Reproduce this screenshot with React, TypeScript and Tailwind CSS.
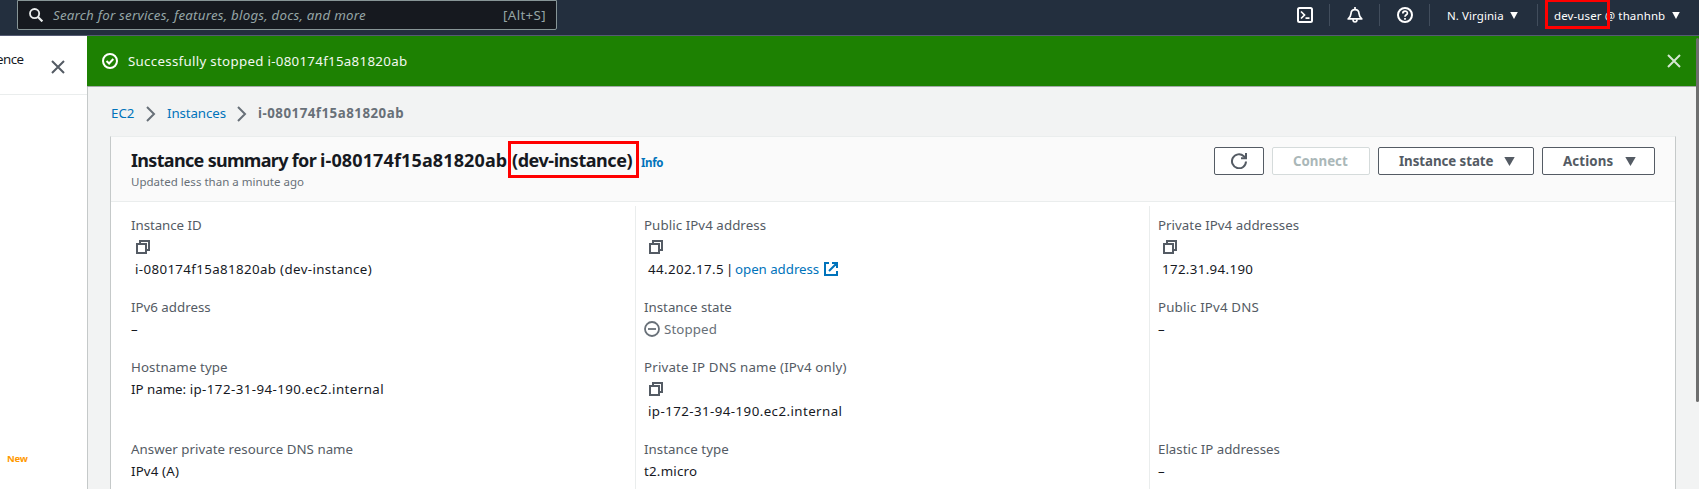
import type { ReactNode } from "react";

function Caret({ className }: { className: string }) {
  return (
    <svg viewBox="0 0 11 9" className={className} fill="currentColor" preserveAspectRatio="none">
      <path d="M0.3 0h10.4L5.5 9z" />
    </svg>
  );
}

function Close({ className }: { className: string }) {
  return (
    <svg viewBox="0 0 14 14" className={className} fill="none" stroke="currentColor" strokeWidth="2">
      <path d="M1 1l12 12M13 1L1 13" />
    </svg>
  );
}

function Chevron() {
  return (
    <svg viewBox="0 0 10 16" className="h-4 w-2.5 shrink-0 text-[#687078]" fill="none" stroke="currentColor" strokeWidth="2">
      <path d="M1 1l7 7-7 7" />
    </svg>
  );
}

function CopyIcon() {
  return (
    <div className="flex h-[22px] items-center pl-1">
      <svg viewBox="0 0 16 16" className="size-4 text-[#545b64]" fill="none" stroke="currentColor" strokeWidth="2">
        <path d="M2 5h9v9H2z" />
        <path d="M5 5V2h9v9h-3" />
      </svg>
    </div>
  );
}

function Field({ label, tracking = "tracking-normal", height, children }: { label: string; tracking?: string; height: string; children: ReactNode }) {
  return (
    <div className={height}>
      <div className={`text-[#545b64] ${tracking}`}>{label}</div>
      {children}
    </div>
  );
}

function Divider() {
  return <div className="h-[22px] w-px bg-[#414d5c]" />;
}

function Header() {
  return (
    <header className="flex h-9 shrink-0 border-b border-[#545b73] bg-[#232f3e] pl-[17px] text-white">
      <div className="flex h-[30px] w-[540px] items-center rounded-b-[2px] border border-[#879596] bg-[#16191f] pr-[10px] pl-[11px] text-[13.3px] text-[#95a5a6]">
        <svg viewBox="0 0 14 14" className="size-[14px] text-[#eaeded]" fill="none" stroke="currentColor" strokeWidth="1.8">
          <circle cx="5.6" cy="5.6" r="4.6" />
          <path d="M9 9l4.4 4.4" strokeWidth="2.2" />
        </svg>
        <span className="ml-[10px] pt-px tracking-[0.23px] italic">Search for services, features, blogs, docs, and more</span>
        <span className="ml-auto pt-px tracking-[0.37px]">[Alt+S]</span>
      </div>
      <div className="ml-auto flex h-[30px] items-center text-[11.5px]">
        <svg viewBox="0 0 16 16" className="mr-4 size-4" fill="none" stroke="currentColor" strokeWidth="2">
          <rect x="1" y="1" width="14" height="14" rx="1.5" />
          <path d="M4 4.5L7.5 8 4 11.5M8.5 11.2h4" strokeWidth="1.7" />
        </svg>
        <Divider />
        <svg viewBox="0 0 16 16" className="mr-4 ml-[17px] size-4" fill="none" stroke="currentColor" strokeWidth="1.7" strokeLinejoin="round">
          <path d="M1.2 11.9C3.2 10.4 3.8 9 4 6.6 4.1 4.1 5.6 2.6 8 2.6s3.9 1.5 4 4c.2 2.4.8 3.8 2.8 5.3z" />
          <path d="M8 0v2.4M6 12.3c0 3.6 4 3.6 4 0" />
        </svg>
        <Divider />
        <svg viewBox="0 0 16 16" className="mr-4 ml-[17px] size-4" fill="none" stroke="currentColor" strokeWidth="2">
          <circle cx="8" cy="8" r="7" />
          <path d="M5.8 6.6C5.8 3.4 10.4 3.5 10.4 6.2 10.4 7.8 8 7.8 8 9.8M8 10.9v1.8" strokeWidth="1.7" />
        </svg>
        <Divider />
        <span className="ml-[17px] w-[58px] pt-px tracking-[0.07px] whitespace-nowrap">N. Virginia</span>
        <Caret className="ml-[5px] h-[7px] w-2" />
        <div className="ml-[19px]">
          <Divider />
        </div>
        <span className="relative ml-4 w-[113px] pt-px tracking-[0.12px] whitespace-nowrap">
          dev-user @ thanhnb
          <span className="absolute -top-[7px] -left-[9px] h-[30px] w-[65px] border-[3px] border-[#f00]" />
        </span>
        <Caret className="mr-[19px] ml-[5px] h-[7px] w-2" />
      </div>
    </header>
  );
}

function Sidebar() {
  return (
    <aside className="flex w-[87px] shrink-0 flex-col bg-white">
      <div className="flex h-[59px] justify-between border-b border-[#eaeded] pr-[22px]">
        <span className="-ml-[4px] pt-[12px] text-[13.3px] leading-[22px] tracking-[-0.5px] text-[#16191f]">ence</span>
        <Close className="mt-6 size-[14px] text-[#545b64]" />
      </div>
      <span className="mt-[358px] ml-[7px] text-[9.5px] leading-3 font-bold tracking-[-0.2px] text-[#ff9900]">New</span>
    </aside>
  );
}

const button = "flex h-7 items-center rounded-[2px] border bg-white text-left whitespace-nowrap";

function CardHeader() {
  return (
    <div className="flex h-[65px] shrink-0 justify-between border-b border-[#eaeded] bg-[#fafafa] pr-5 pl-5">
      <div>
        <h2 className="flex h-[44px] items-baseline pt-[12px] text-[18px] leading-[22px] font-bold whitespace-nowrap text-[#16191f]">
          <span className="w-[189px] tracking-[-0.68px]">Instance summary for</span>
          <span className="w-[192px] tracking-[0.13px]">i-080174f15a81820ab</span>
          <span className="relative w-[129px] tracking-[-0.45px]">
            (dev-instance)
            <span className="absolute -top-[8px] -left-[4px] h-[37px] w-[131px] border-[3px] border-[#f00]" />
          </span>
          <span className="text-[11.5px] tracking-[-0.35px] text-[#0073bb]">Info</span>
        </h2>
        <p className="-mt-[7px] text-[11.5px] leading-4 tracking-[0.02px] text-[#687078]">Updated less than a minute ago</p>
      </div>
      <div className="flex gap-2 pt-[10px] text-[13.3px] font-bold text-[#545b64]">
        <button className={`${button} w-[50px] justify-center border-[#545b64]`}>
          <svg viewBox="0 0 16 16" className="size-4" fill="none" stroke="currentColor" strokeWidth="2">
            <path d="M15 8.5A7 7 0 1 1 12.8 3.2L15 5.2" />
            <path d="M15 0v5.2h-5" />
          </svg>
        </button>
        <button className={`${button} w-[98px] border-[#d5dbdb] pt-px pl-5 text-[#aab7b8]`}>Connect</button>
        <button className={`${button} w-[156px] border-[#545b64] pl-5 tracking-[-0.06px]`}>
          <span className="w-[105px] pt-px">Instance state</span>
          <Caret className="h-[9px] w-[11px]" />
        </button>
        <button className={`${button} w-[113px] border-[#545b64] pl-5 tracking-[0.13px]`}>
          <span className="w-[62px] pt-px">Actions</span>
          <Caret className="h-[9px] w-[11px]" />
        </button>
      </div>
    </div>
  );
}

function Summary() {
  return (
    <div className="flex min-h-0 flex-1 pt-1 text-[13.3px] leading-[22px] whitespace-nowrap text-[#16191f]">
      <div className="w-[524px] pt-2 pl-5">
        <Field label="Instance ID" tracking="tracking-[-0.05px]" height="h-[82px]">
          <CopyIcon />
          <div className="pl-1 tracking-[0.37px]">i-080174f15a81820ab (dev-instance)</div>
        </Field>
        <Field label="IPv6 address" height="h-[60px]">–</Field>
        <Field label="Hostname type" tracking="tracking-[0.1px]" height="h-[82px]">
          <span>IP name: </span>
          <span className="tracking-[0.43px]">ip-172-31-94-190.ec2.internal</span>
        </Field>
        <Field label="Answer private resource DNS name" tracking="tracking-[0.03px]" height="h-[44px]">
          <span className="tracking-[0.15px]">IPv4 (A)</span>
        </Field>
      </div>
      <div className="w-[514px] border-l border-[#eaeded] pt-2 pl-2">
        <Field label="Public IPv4 address" tracking="tracking-[0.07px]" height="h-[82px]">
          <CopyIcon />
          <div className="flex items-center pl-1">
            <span className="w-[78px] tracking-[0.4px]">44.202.17.5</span>
            <span className="w-[9px]">|</span>
            <a className="w-[89px] tracking-[-0.04px] text-[#0073bb]">open address</a>
            <svg viewBox="0 0 14 14" className="size-[14px] text-[#0073bb]" fill="none" stroke="currentColor" strokeWidth="2">
              <path d="M5 1H1v12h12V9M8 1h5v5M13 1L5 9" />
            </svg>
          </div>
        </Field>
        <Field label="Instance state" height="h-[60px]">
          <div className="flex items-center gap-1 text-[#687078]">
            <svg viewBox="0 0 16 16" className="size-4" fill="none" stroke="currentColor" strokeWidth="1.8">
              <circle cx="8" cy="8" r="7" />
              <path d="M4 8h8" />
            </svg>
            <span className="tracking-[0.12px]">Stopped</span>
          </div>
        </Field>
        <Field label="Private IP DNS name (IPv4 only)" tracking="tracking-[0.17px]" height="h-[82px]">
          <CopyIcon />
          <div className="pl-1 tracking-[0.43px]">ip-172-31-94-190.ec2.internal</div>
        </Field>
        <Field label="Instance type" tracking="tracking-[0.05px]" height="h-[44px]">
          <span className="tracking-[0.22px]">t2.micro</span>
        </Field>
      </div>
      <div className="flex-1 border-l border-[#eaeded] pt-2 pl-2">
        <Field label="Private IPv4 addresses" tracking="tracking-[0.03px]" height="h-[82px]">
          <CopyIcon />
          <div className="pl-1 tracking-[0.35px]">172.31.94.190</div>
        </Field>
        <Field label="Public IPv4 DNS" tracking="tracking-[0.15px]" height="h-[142px]">–</Field>
        <Field label="Elastic IP addresses" height="h-[44px]">–</Field>
      </div>
    </div>
  );
}

export default function App() {
  return (
    <div className="flex h-[489px] w-[1699px] flex-col overflow-hidden bg-[#f2f3f3] font-['Noto_Sans',sans-serif]">
      <Header />
      <div className="flex min-h-0 flex-1">
        <Sidebar />
        <main className="relative flex min-w-0 flex-1 flex-col border-l border-[#c5c9c9]">
          <div className="-ml-px flex h-[51px] shrink-0 items-center border-b border-[#a3aaa8] bg-[#1d8102] pr-[18px] pl-[15px] text-[13.3px] text-[#f2f8f0]">
            <svg viewBox="0 0 16 16" className="size-4 text-white" fill="none" stroke="currentColor" strokeWidth="2">
              <circle cx="8" cy="8" r="7" />
              <path d="M4.5 8l2.6 2.5L11.3 6" />
            </svg>
            <span className="ml-[10px] pt-px tracking-[0.3px]">Successfully stopped i-080174f15a81820ab</span>
            <Close className="ml-auto size-[14px] text-[#d5e6d2]" />
          </div>
          <nav className="flex h-[49px] shrink-0 items-center pt-1 pl-[23px] text-[13.3px] whitespace-nowrap text-[#0073bb]">
            <a className="w-[35px]">EC2</a>
            <Chevron />
            <a className="ml-[11px] w-[70px] tracking-[-0.1px]">Instances</a>
            <Chevron />
            <span className="ml-[11px] font-bold tracking-[0.5px] text-[#687078]">i-080174f15a81820ab</span>
          </nav>
          <section className="mr-[23px] ml-[22px] flex min-h-0 flex-1 flex-col border-x border-[#c5c9c9] border-t border-t-[#eaeded] bg-white">
            <CardHeader />
            <Summary />
          </section>
          <div className="absolute top-0.5 right-0 h-[364px] w-[3px] rounded-full bg-[#6e6e6e]" />
        </main>
      </div>
    </div>
  );
}
